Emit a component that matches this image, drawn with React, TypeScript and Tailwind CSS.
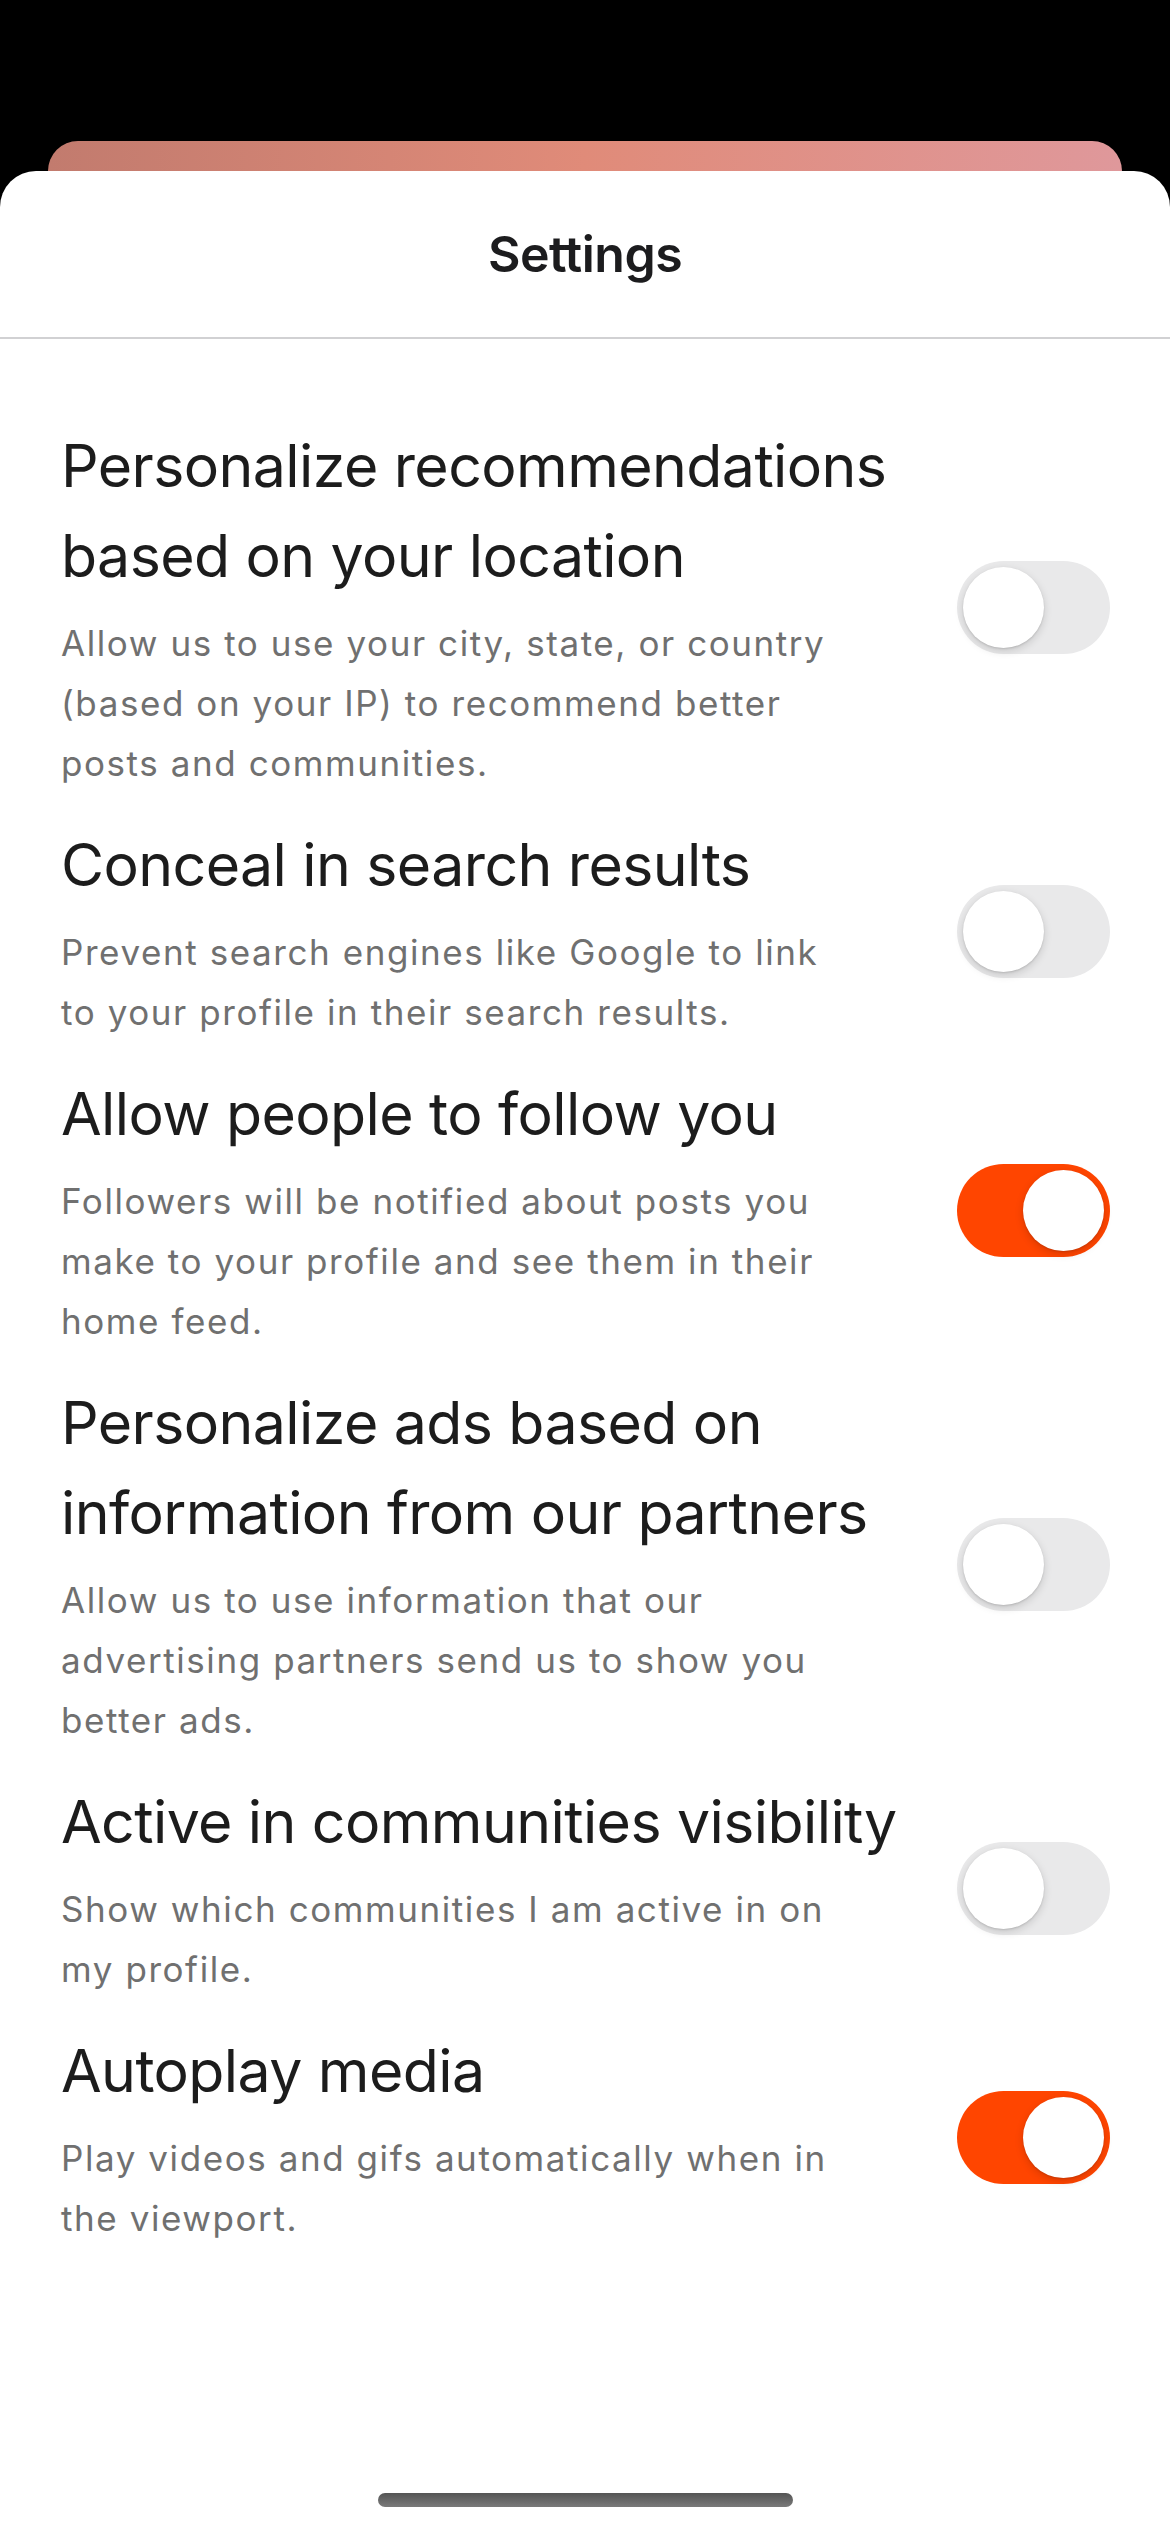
import { useState } from 'react';

const settings = [
  {
    title: 'Personalize recommendations based on your location',
    desc: 'Allow us to use your city, state, or country (based on your IP) to recommend better posts and communities.',
    on: false,
  },
  {
    title: 'Conceal in search results',
    desc: 'Prevent search engines like Google to link to your profile in their search results.',
    on: false,
  },
  {
    title: 'Allow people to follow you',
    desc: 'Followers will be notified about posts you make to your profile and see them in their home feed.',
    on: true,
  },
  {
    title: 'Personalize ads based on information from our partners',
    desc: 'Allow us to use information that our advertising partners send us to show you better ads.',
    on: false,
  },
  {
    title: 'Active in communities visibility',
    desc: 'Show which communities I am active in on my profile.',
    on: false,
  },
  {
    title: 'Autoplay media',
    desc: 'Play videos and gifs automatically when in the viewport.',
    on: true,
  },
];

function Toggle({ on, onClick }: { on: boolean; onClick: () => void }) {
  return (
    <button
      onClick={onClick}
      className={`shrink-0 w-[153px] h-[93px] rounded-full p-[6px] flex items-center transition ${
        on ? 'bg-[#ff4500] justify-end' : 'bg-[#e9e9ea] justify-start'
      }`}
    >
      <span className="block w-[81px] h-[81px] rounded-full bg-white shadow-[0_3px_8px_rgba(0,0,0,0.15),0_1px_2px_rgba(0,0,0,0.12)]" />
    </button>
  );
}

export default function App() {
  const [values, setValues] = useState(settings.map((s) => s.on));

  return (
    <div className="min-h-[2532px] bg-black pt-[141px] flex flex-col" style={{ fontFamily: 'Inter, "Liberation Sans", sans-serif' }}>
      {/* Card peeking behind the sheet */}
      <div className="mx-[48px] h-[30px] rounded-t-[30px] bg-gradient-to-r from-[#c27b6e] via-[#e08b79] to-[#df989b]" />

      {/* Sheet */}
      <div className="flex-1 bg-white rounded-t-[36px] flex flex-col">
        <div className="h-[168px] flex items-center justify-center border-b-2 border-[#d1d1d3]">
          <h1 className="text-[50px] font-semibold text-[#1c1c1e] tracking-[-0.01em]">Settings</h1>
        </div>

        <div className="pt-[82px] pl-[61px] pr-[60px] flex flex-col gap-[27px]">
          {settings.map((s, i) => (
            <div key={s.title} className="flex items-center">
              <div className="flex-1 pr-[36px]">
                <div className="text-[59px] leading-[90px] text-[#1c1c1c] tracking-[-0.01em]">
                  {s.title}
                </div>
                <p className="mt-[12px] max-w-[785px] text-[35px] leading-[60px] text-[#707070] tracking-[0.045em]">
                  {s.desc}
                </p>
              </div>
              <Toggle
                on={values[i]}
                onClick={() => setValues(values.map((v, j) => (j === i ? !v : v)))}
              />
            </div>
          ))}
        </div>

        {/* Home indicator */}
        <div className="mt-auto mb-[25px] flex justify-center">
          <div className="w-[415px] h-[14px] rounded-full bg-gradient-to-b from-[#555555] to-[#7a7a7a]" />
        </div>
      </div>
    </div>
  );
}
